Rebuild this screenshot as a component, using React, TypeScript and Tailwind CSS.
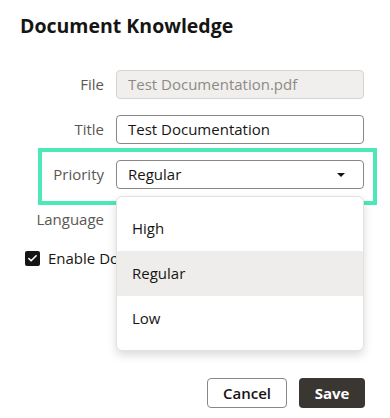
import { Check } from 'lucide-react';

const font = { fontFamily: '"Open Sans", "Noto Sans", sans-serif' };

function Row({ label, children }: { label: string; children?: React.ReactNode }) {
  return (
    <div className="flex items-center h-[29px]">
      <div className="w-[84px] text-right text-[15px] text-[#5b5752]">{label}</div>
      <div className="ml-[12px] w-[248px]">{children}</div>
    </div>
  );
}

export default function App() {
  return (
    <div className="w-[390px] h-[418px] bg-white relative overflow-hidden" style={font}>
      <div className="pl-[20px] pt-[12px]">
        <h1 className="text-[19.5px] font-bold text-[#161513] leading-[28px]">Document Knowledge</h1>

        <div className="mt-[30px] flex flex-col gap-[16px]">
          <Row label="File">
            <div className="h-[29px] rounded-[4px] border border-[#d6d4d1] bg-[#f1efed] px-[11px] flex items-center text-[15px] text-[#8d8a86]">
              Test Documentation.pdf
            </div>
          </Row>
          <Row label="Title">
            <div className="h-[29px] rounded-[4px] border border-[#8a8784] bg-white px-[11px] flex items-center text-[15px] text-[#161513]">
              Test Documentation
            </div>
          </Row>
          <div className="relative">
            <Row label="Priority">
              <div className="h-[29px] rounded-[4px] border border-[#8a8784] bg-white pl-[11px] pr-[18px] flex items-center justify-between text-[15px] text-[#161513]">
                <span>Regular</span>
                <span className="w-0 h-0 border-l-[4px] border-r-[4px] border-t-[4px] border-l-transparent border-r-transparent border-t-[#161513]" />
              </div>
            </Row>
            <div className="absolute left-[18px] top-[-12px] w-[339px] h-[57px] border-[4px] border-[#4de8b8] pointer-events-none" />
          </div>
          <Row label="Language" />
        </div>

        <div className="mt-[13px] flex items-center gap-[8px] pl-[5px]">
          <span className="w-[15px] h-[15px] shrink-0 rounded-[2px] bg-[#161513] flex items-center justify-center">
            <Check size={11} strokeWidth={3.5} className="text-white" />
          </span>
          <span className="w-[68px] overflow-hidden whitespace-nowrap text-[15px] text-[#161513]">Enable Document Knowledge</span>
        </div>
      </div>

      <div className="absolute left-[116px] top-[196px] w-[248px] rounded-[6px] border border-[#e4e2df] bg-white shadow-[0_4px_10px_rgba(0,0,0,0.15)] py-[9px] text-[15px] text-[#161513]">
        <div className="h-[45px] px-[15px] flex items-center">High</div>
        <div className="h-[45px] px-[15px] flex items-center bg-[#efedeb]">Regular</div>
        <div className="h-[45px] px-[15px] flex items-center">Low</div>
      </div>

      <div className="absolute right-[25px] bottom-[10px] flex gap-[12px]">
        <button className="w-[80px] h-[30px] rounded-[4px] border border-[#8a8784] bg-white text-[15px] font-semibold text-[#161513]">
          Cancel
        </button>
        <button className="w-[66px] h-[30px] rounded-[4px] bg-[#3a3632] text-[15px] font-bold text-white">
          Save
        </button>
      </div>
    </div>
  );
}
